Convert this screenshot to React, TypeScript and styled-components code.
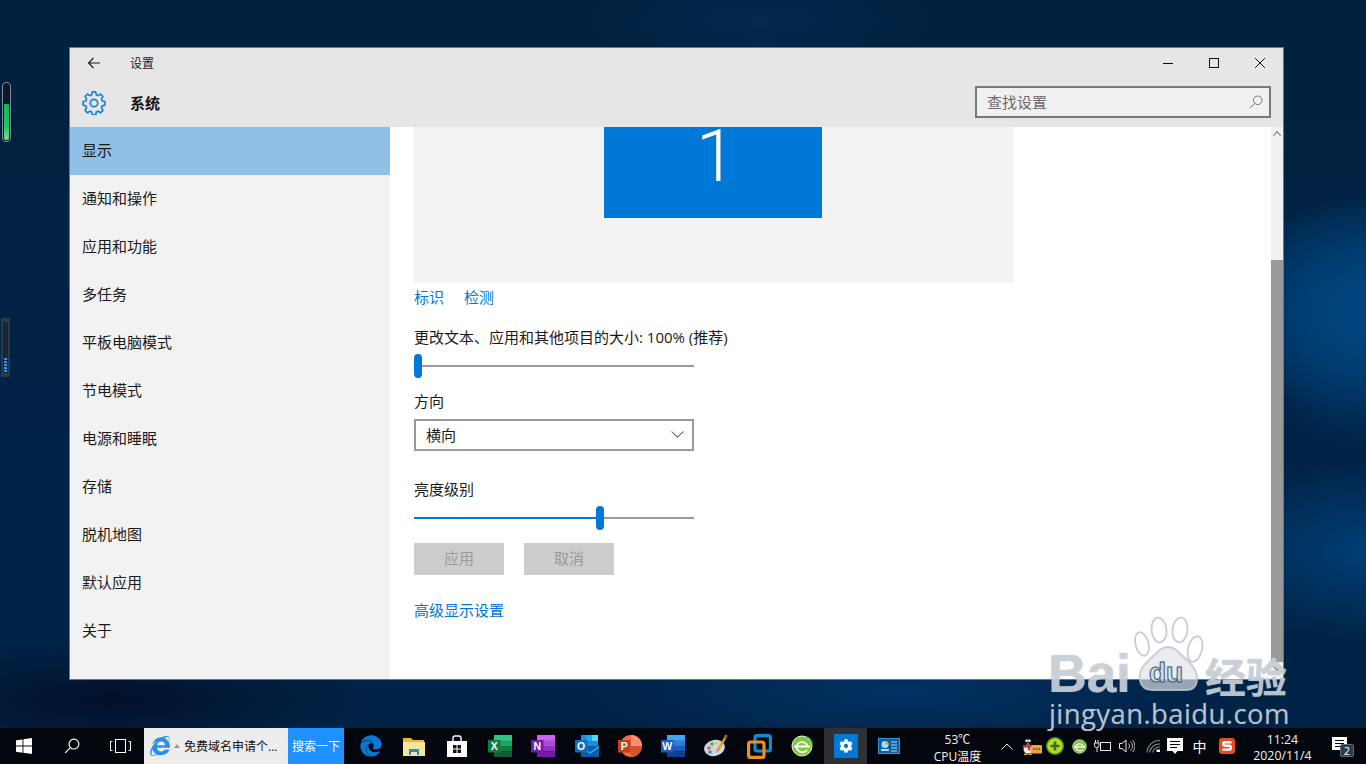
import React from "react";
import styled, { createGlobalStyle } from "styled-components";
import { FaEdge, FaInternetExplorer, FaCog } from "react-icons/fa";

const CJK = `"Open Sans", "Noto Sans CJK SC", sans-serif`;

const Global = createGlobalStyle`
  html, body { margin: 0; padding: 0; width: 1366px; height: 764px; overflow: hidden; }
  body { font-family: ${CJK}; font-size: 15px; color: #1a1a1a; }
  * { box-sizing: border-box; }
`;

const Desktop = styled.div`
  position: relative;
  width: 1366px;
  height: 764px;
  display: flex;
  flex-direction: column;
  overflow: hidden;
  background:
    radial-gradient(130px 130px at 100% 42%, #00447e 0%, rgba(0, 68, 126, 0) 100%),
    radial-gradient(160px 110px at 100% 40%, #004580 0%, rgba(0, 69, 128, 0) 100%),
    radial-gradient(170px 90px at 100% 72%, #003f75 0%, rgba(0, 63, 117, 0) 100%),
    radial-gradient(320px 60px at 900px 690px, #013163 0%, rgba(1, 49, 99, 0) 100%),
    radial-gradient(260px 60px at 110px 700px, #01102a 0%, rgba(1, 16, 42, 0) 100%),
    radial-gradient(180px 50px at 760px 20px, #03294f 0%, rgba(3, 41, 79, 0) 100%),
    linear-gradient(180deg, #01213f 0%, #012347 60%, #012347 100%);
`;

const WindowArea = styled.div`
  flex: 1;
  padding: 47px 0 0 69px;
`;

const Win = styled.div`
  width: 1215px;
  height: 633px;
  border: 1px solid #2f87d4;
  background: #fff;
  display: flex;
  flex-direction: column;
`;

const Header = styled.header`
  height: 79px;
  background: #e6e6e6;
  display: flex;
  flex-direction: column;
  flex-shrink: 0;
`;

const TitleRow = styled.div`
  height: 30px;
  display: flex;
  align-items: center;
`;

const BackSlot = styled.div`
  width: 60px;
  display: flex;
  justify-content: center;
  padding-right: 12px;
`;

const TitleText = styled.span`
  font-size: 12px;
  color: #222;
  flex: 1;
  margin-top: -1px;
`;

const Caption = styled.div`
  width: 46px;
  height: 30px;
  display: flex;
  align-items: center;
  justify-content: center;
`;

const HeadRow = styled.div`
  flex: 1;
  display: flex;
  align-items: center;
  padding: 0 12px;
`;

const GearSlot = styled.div`
  width: 48px;
  display: flex;
  align-items: center;
`;

const SectionName = styled.span`
  font-size: 15px;
  font-weight: 700;
  color: #111;
  flex: 1;
`;

const SearchBox = styled.div`
  width: 296px;
  height: 32px;
  margin-top: -2px;
  border: 2px solid #7a7a7a;
  background: #f0f0f0;
  display: flex;
  align-items: center;
  justify-content: space-between;
  padding: 0 6px 0 10px;
  color: #6b6b6b;
`;

const Body = styled.div`
  flex: 1;
  display: flex;
  min-height: 0;
`;

const Sidebar = styled.nav`
  width: 320px;
  background: #f2f2f2;
  flex-shrink: 0;
`;

const NavItem = styled.div<{ $active?: boolean }>`
  height: 48px;
  line-height: 47px;
  padding-left: 12px;
  font-size: 15px;
  color: #1a1a1a;
  background: ${(p) => (p.$active ? "#90c0e8" : "transparent")};
`;

const Content = styled.main`
  flex: 1;
  padding-left: 24px;
  background: #fff;
`;

const Preview = styled.div`
  width: 600px;
  height: 156px;
  background: #f3f3f3;
  padding-left: 190px;
`;

const Monitor = styled.div`
  width: 218px;
  height: 91px;
  background: #0078d7;
  color: #fff;
  font-family: "Roboto", "Open Sans", sans-serif;
  font-weight: 300;
  font-size: 72px;
  line-height: 60px;
  text-align: center;
  padding-left: 6px;
`;

const LinkRow = styled.div`
  display: flex;
  gap: 20px;
  margin-top: 4px;
  height: 20px;
  line-height: 20px;
`;

const Link = styled.a<{ $top?: number }>`
  color: #0078d7;
  font-size: 15px;
  display: block;
  line-height: 20px;
  margin-top: ${(p) => p.$top ?? 0}px;
`;

const Label = styled.div<{ $top: number }>`
  font-size: 15px;
  line-height: 20px;
  color: #1a1a1a;
  margin-top: ${(p) => p.$top}px;
`;

const Slider = styled.div<{ $top: number }>`
  position: relative;
  width: 280px;
  height: 24px;
  margin-top: ${(p) => p.$top}px;
  display: flex;
  align-items: center;
`;

const Track = styled.div`
  width: 100%;
  height: 2px;
  background: #999;
`;

const Fill = styled.div`
  position: absolute;
  left: 0;
  top: 11px;
  height: 2px;
  background: #0078d7;
`;

const Thumb = styled.div`
  position: absolute;
  top: 0;
  width: 8px;
  height: 24px;
  border-radius: 4px;
  background: #0078d7;
`;

const Select = styled.div`
  width: 280px;
  height: 32px;
  margin-top: 8px;
  border: 2px solid #999;
  display: flex;
  align-items: center;
  justify-content: space-between;
  padding: 0 8px 2px 10px;
`;

const ButtonRow = styled.div`
  display: flex;
  gap: 20px;
  margin-top: 13px;
`;

const Btn = styled.div`
  width: 90px;
  height: 32px;
  line-height: 31px;
  text-align: center;
  background: #ccc;
  color: #9a9a9a;
  font-size: 15px;
`;

const Scrollbar = styled.div`
  width: 12px;
  background: #f0f0f0;
  display: flex;
  flex-direction: column;
  align-items: center;
  flex-shrink: 0;
`;

const ArrowCell = styled.div`
  height: 12px;
  display: flex;
  align-items: center;
  justify-content: center;
  width: 100%;
`;

const ScrollSpace = styled.div`
  height: 121px;
`;

const ScrollThumb = styled.div`
  width: 100%;
  height: 402px;
  background: #999;
`;

const Taskbar = styled.footer`
  height: 36px;
  background: #03060c;
  display: flex;
  align-items: center;
  flex-shrink: 0;
  color: #fff;
`;

const Slot = styled.div<{ $w: number }>`
  width: ${(p) => p.$w}px;
  height: 36px;
  flex-shrink: 0;
  display: flex;
  align-items: center;
  justify-content: center;
`;

const IeBox = styled.div`
  width: 144px;
  height: 36px;
  background: #ededed;
  display: flex;
  align-items: center;
  padding-left: 6px;
  color: #111;
  font-size: 12px;
  flex-shrink: 0;
`;

const IeCaret = styled.span`
  width: 0;
  height: 0;
  margin: 0 4px 0 4px;
  border-left: 3px solid transparent;
  border-right: 3px solid transparent;
  border-bottom: 4px solid #999;
`;

const SearchGo = styled.div`
  width: 56px;
  height: 36px;
  line-height: 37px;
  text-align: center;
  background: #1e90ff;
  font-size: 12px;
  color: #fff;
  flex-shrink: 0;
`;

const AppSpacer = styled.div`
  width: 5px;
  flex-shrink: 0;
`;

const AppSlots = styled.div`
  display: grid;
  grid-template-columns: repeat(13, 43.2px);
  flex-shrink: 0;
  margin-right: 9px;
`;

const AppSlot = styled.div<{ $hover?: boolean }>`
  height: 36px;
  display: flex;
  align-items: center;
  justify-content: center;
  background: ${(p) => (p.$hover ? "#2e3033" : "transparent")};
`;

const SettingsTile = styled.div`
  width: 24px;
  height: 24px;
  background: #0078d7;
  display: flex;
  align-items: center;
  justify-content: center;
`;

const Stack = styled.div`
  width: 76px;
  flex-shrink: 0;
  text-align: center;
  font-size: 12px;
  line-height: 17px;
  color: #f2f2f2;
  padding-top: 3px;
`;

const ClockStack = styled(Stack)`
  width: 78px;
  line-height: 16px;
  padding-top: 3px;
  font-size: 12.3px;
`;

const Ime = styled.span`
  font-size: 14px;
  color: #fff;
`;

const Gadget = styled.div<{ $top: number; $h: number; $w: number; $left: number }>`
  position: absolute;
  left: ${(p) => p.$left}px;
  top: ${(p) => p.$top}px;
  width: ${(p) => p.$w}px;
  height: ${(p) => p.$h}px;
`;

const Tube = styled(Gadget)`
  border: 1px solid #7f8b96;
  border-radius: 4px;
  background: #0a1a2c;
  padding: 21px 1px 1px;
`;

const TubeFill = styled.div`
  height: 100%;
  border-radius: 0 0 3px 3px;
  background: linear-gradient(180deg, #12b65a 0%, #22c866 65%, #7fe08a 100%);
`;

const Meter = styled(Gadget)`
  background: #2b3b4a;
  border-radius: 1px;
  padding: 4px 2px 4px;
`;

const MeterInner = styled.div`
  height: 100%;
  background: #1b2530;
  display: flex;
  flex-direction: column;
  justify-content: flex-end;
  align-items: center;
  padding-bottom: 1px;
`;

const MeterBlue = styled.div`
  width: 3px;
  height: 14px;
  background: repeating-linear-gradient(180deg, #19a0f0 0 2px, #123 2px 3px);
`;

const Watermark = styled.div`
  position: absolute;
  left: 1048px;
  top: 616px;
  width: 244px;
  height: 114px;
  pointer-events: none;
  color: rgba(222, 228, 236, 0.72);
  text-shadow: 0 0 1px rgba(120, 130, 140, 0.8);
`;

const MarkBai = styled.span`
  position: absolute;
  left: 0;
  top: 27px;
  font: 700 54px/60px "Liberation Sans", sans-serif;
  letter-spacing: -0.5px;
`;

const MarkCn = styled.span`
  position: absolute;
  left: 157px;
  top: 33px;
  font: 700 41px/52px "Noto Sans CJK SC", sans-serif;
`;

const MarkUrl = styled.span`
  position: absolute;
  left: 1px;
  top: 82px;
  font: 400 27.5px/32px "Open Sans", "Liberation Sans", sans-serif;
  letter-spacing: 0.4px;
  white-space: nowrap;
`;

const MarkPaw = styled.svg`
  position: absolute;
  left: 86px;
  top: 0;
`;

const Back = () => (
  <svg width="14" height="12" viewBox="0 0 14 12" fill="none" stroke="#1a1a1a" strokeWidth="1.1">
    <path d="M13 6H1.5M6.5 1 1.5 6l5 5" />
  </svg>
);
const MinI = () => (
  <svg width="12" height="12" viewBox="0 0 12 12"><path d="M1 6.5h10" stroke="#111" strokeWidth="1" /></svg>
);
const MaxI = () => (
  <svg width="12" height="12" viewBox="0 0 12 12"><rect x="1.5" y="1.5" width="9" height="9" fill="none" stroke="#111" strokeWidth="1" /></svg>
);
const CloseI = () => (
  <svg width="12" height="12" viewBox="0 0 12 12"><path d="M1 1l10 10M11 1 1 11" stroke="#111" strokeWidth="1" /></svg>
);
const HeadGear = () => (
  <svg width="24" height="24" viewBox="0 0 24 24" fill="none" stroke="#1683d8" strokeWidth="1.7">
    <circle cx="12" cy="12" r="3.7" />
    <path d="M10.2 1.5h3.6l.6 2.9 2 .8 2.5-1.6 2.500 2.500-1.600 2.500.8 2 2.900.6v3.600l-2.900.6-.8 2 1.600 2.500-2.500 2.500-2.500-1.600-2 .8-.6 2.900h-3.600l-.6-2.900-2-.8-2.500 1.600-2.500-2.500 1.600-2.500-.8-2-2.900-.6v-3.600l2.900-.6.8-2-1.600-2.500 2.500-2.500 2.500 1.600 2-.8z" strokeLinejoin="round" transform="translate(.6 -.6) scale(.95 1)" />
  </svg>
);
const Lens = ({ c = "#777", s = 14 }: { c?: string; s?: number }) => (
  <svg width={s} height={s} viewBox="0 0 14 14" fill="none" stroke={c} strokeWidth="1">
    <circle cx="8.7" cy="5.3" r="4.3" />
    <path d="M5.6 8.4 1 13" />
  </svg>
);
const Chevron = ({ c = "#555", w = 12, h = 7, up = false, sw = 1 }: { c?: string; w?: number; h?: number; up?: boolean; sw?: number }) => (
  <svg width={w} height={h} viewBox="0 0 12 7" fill="none" stroke={c} strokeWidth={sw} preserveAspectRatio="none">
    <path d={up ? "M.5 6.5 6 1l5.5 5.5" : "M.5.5 6 6 11.5.5"} />
  </svg>
);
const WinLogo = () => (
  <svg width="16" height="16" viewBox="0 0 16 16" fill="#fff">
    <path d="M0 2.3 6.5 1.4v6.2H0zM7.4 1.3 16 0v7.6H7.4zM0 8.5h6.5v6.2L0 13.8zM7.4 8.5H16V16l-8.6-1.3z" />
  </svg>
);
const TaskView = () => (
  <svg width="21" height="14" viewBox="0 0 21 14" fill="none" stroke="#fff" strokeWidth="1">
    <rect x="5.5" y=".5" width="10" height="13" />
    <path d="M2.5 2.5H.5v9h2M18.5 2.5h2v9h-2" />
  </svg>
);
const Folder = () => (
  <svg width="22" height="19" viewBox="0 0 22 19">
    <path d="M0 1h8l2 2h11v15H0z" fill="#e9b93c" />
    <rect x="0" y="5" width="22" height="14" fill="#fbe39a" />
    <rect x="6" y="12" width="10" height="6" fill="#1c8fd0" />
    <rect x="8" y="15" width="6" height="3" fill="#fbe39a" />
  </svg>
);
const Store = () => (
  <svg width="20" height="22" viewBox="0 0 20 22">
    <path d="M6 6V3a2 2 0 0 1 2-2h4a2 2 0 0 1 2 2v3" fill="none" stroke="#fff" strokeWidth="1.4" />
    <rect x="0" y="6" width="20" height="16" fill="#fff" />
    <path d="M6 10h3.5v3.5H6zM10.5 10H14v3.5h-3.5zM6 14.5h3.5V18H6zM10.5 14.5H14V18h-3.5z" fill="#111" />
  </svg>
);
type Office = { a: string; b: string; c: string; d: string; tile: string; l: string };
const OfficeIcon = ({ a, b, c, d, tile, l }: Office) => (
  <svg width="24" height="22" viewBox="0 0 24 22">
    <rect x="6" y="0" width="18" height="6" fill={a} />
    <rect x="6" y="5.5" width="18" height="5.5" fill={b} />
    <rect x="6" y="11" width="18" height="5.5" fill={c} />
    <rect x="6" y="16.5" width="18" height="5.5" fill={d} />
    <rect x="0" y="5" width="12.5" height="12.5" fill={tile} />
    <text x="6.2" y="15" textAnchor="middle" fontSize="10.5" fontWeight="700" fill="#fff" fontFamily="Liberation Sans">{l}</text>
  </svg>
);
const Outlook = () => (
  <svg width="24" height="22" viewBox="0 0 24 22">
    <rect x="6" y="0" width="17" height="12" fill="#1490df" />
    <rect x="11" y="0" width="6" height="6" fill="#28a8ea" />
    <rect x="17" y="0" width="6" height="6" fill="#50d9ff" />
    <path d="M6 11h18v11H6z" fill="#0a5ea8" />
    <path d="M6 11l9 6 9-6v2l-9 6-9-6z" fill="#28a8ea" />
    <rect x="0" y="5" width="12.5" height="12.5" fill="#0f6cbd" />
    <text x="6.2" y="15" textAnchor="middle" fontSize="10.5" fontWeight="700" fill="#fff" fontFamily="Liberation Sans">O</text>
  </svg>
);
const Ppt = () => (
  <svg width="24" height="24" viewBox="0 0 24 24">
    <circle cx="13" cy="12" r="11" fill="#ed6c47" />
    <path d="M13 1a11 11 0 0 1 11 11H13z" fill="#ff8f6b" />
    <path d="M13 12h11a11 11 0 0 1-11 11z" fill="#d35230" />
    <rect x="0" y="6" width="12.5" height="12.5" fill="#c43e1c" />
    <text x="6.2" y="16" textAnchor="middle" fontSize="10.5" fontWeight="700" fill="#fff" fontFamily="Liberation Sans">P</text>
  </svg>
);
const Palette = () => (
  <svg width="24" height="24" viewBox="0 0 24 24">
    <ellipse cx="10.5" cy="14" rx="10.5" ry="8" fill="#cfd8de" transform="rotate(-14 10.5 14)" />
    <circle cx="5" cy="14" r="1.8" fill="#e85c40" />
    <circle cx="8" cy="10" r="1.8" fill="#3fb35a" />
    <circle cx="12.5" cy="9" r="1.6" fill="#e8c43a" />
    <circle cx="6" cy="18" r="1.8" fill="#3a8ee0" />
    <path d="M22 .5 23.5 2 15 17l-3 2 .7-3.4z" fill="#e59b2e" />
    <path d="M20.5 1 23.5 2.5 22 5 19.5 3.5z" fill="#8a5a2a" />
  </svg>
);
const Vmware = () => (
  <svg width="25" height="25" viewBox="0 0 25 25" fill="none" strokeWidth="3.2">
    <rect x="8" y="1.6" width="15.4" height="15.4" rx="2" stroke="#0a8fd0" />
    <rect x="1.6" y="8" width="15.4" height="15.4" rx="2" stroke="#f29111" />
  </svg>
);
const Globe360 = ({ s = 22 }: { s?: number }) => (
  <svg width={s} height={s} viewBox="0 0 22 22">
    <circle cx="11" cy="11" r="10" fill="#7ccc3a" stroke="#e8f5d8" strokeWidth="1" />
    <path d="M3 11.5h16" stroke="#fff" strokeWidth="2" />
    <path d="M5.5 11a5.8 5.8 0 0 1 11 0M5.5 11a6 6 0 0 0 10.500 4.200" fill="none" stroke="#fff" strokeWidth="1.8" />
    <path d="M16 1.5c3 1.5 5 4 5.5 7" fill="none" stroke="#1d7f2d" strokeWidth="1.2" />
  </svg>
);
const Board = () => (
  <svg width="22" height="16" viewBox="0 0 22 16">
    <rect x=".5" y=".5" width="21" height="15" fill="#0d5f9e" stroke="#2b95d8" />
    <circle cx="7" cy="6.5" r="3.5" fill="#a6dcff" />
    <path d="M7 6.5V3a3.5 3.5 0 0 1 3.5 3.5z" fill="#f0a030" />
    <rect x="3" y="11" width="8" height="2" fill="#a6dcff" />
    <path d="M13 4h6M13 7h6M13 10h6M13 13h6" stroke="#a6dcff" strokeWidth="1.2" />
  </svg>
);
const Qq = () => (
  <svg width="20" height="18" viewBox="0 0 20 18">
    <ellipse cx="6" cy="5" rx="3.8" ry="4.5" fill="#141414" />
    <circle cx="4.6" cy="3.8" r="1.3" fill="#fff" />
    <circle cx="7.4" cy="3.8" r="1.3" fill="#fff" />
    <path d="M4.5 5.8h3L6 7z" fill="#f5b020" />
    <ellipse cx="6" cy="12" rx="4.5" ry="4.5" fill="#f0f0f0" />
    <path d="M1 8h10v2.500H8l.5 3.500-2.500-1V10.500H1z" fill="#d92c20" />
    <path d="M2 16.500h3.500v1.500H2zM6.500 16.500H10v1.500H6.500z" fill="#f0a020" />
    <rect x="9" y="8" width="11" height="8.5" rx="1" fill="#eda23a" />
    <path d="M11.500 12h1.500M14 12h1.500M16.500 12h1.500" stroke="#6a4010" strokeWidth="1.3" />
  </svg>
);
const PlusBall = () => (
  <svg width="18" height="18" viewBox="0 0 18 18">
    <circle cx="9" cy="9" r="8.3" fill="#c6d41a" stroke="#3f9a2e" strokeWidth="1.4" />
    <path d="M9 4.5v9M4.500 9h9" stroke="#1d7a2a" strokeWidth="2.6" />
  </svg>
);
const Power = () => (
  <svg width="17" height="13" viewBox="0 0 17 13" fill="none" stroke="#e8e8e8" strokeWidth="1">
    <rect x="6.5" y="2.5" width="10" height="8" />
    <path d="M1.500 0v3M4 0v3M.5 3h4.500v2.500a2 2 0 0 1-2 2h-.5a2 2 0 0 1-2-2zM3 7.500V12" />
  </svg>
);
const Volume = () => (
  <svg width="16" height="14" viewBox="0 0 16 14" fill="none" stroke="#e8e8e8" strokeWidth="1">
    <path d="M.5 4.500h2.500L7 1v12L3 9.500H.5z" />
    <path d="M9.500 4.500a3.500 3.500 0 0 1 0 5M11.500 2.500a6 6 0 0 1 0 9M13.500 1a8.500 8.500 0 0 1 0 12" strokeOpacity=".75" />
  </svg>
);
const Wifi = () => (
  <svg width="15" height="14" viewBox="0 0 15 14" fill="none" stroke="#8c8c8c" strokeWidth="1.1">
    <path d="M1 13.500A12.500 12.500 0 0 1 14 1.500" />
    <path d="M3.500 13.500a10 10 0 0 1 10.500-8.500" />
    <path d="M6.500 13.500a7 7 0 0 1 7.500-5.500" />
    <path d="M10.500 13v-2.500h3.500V13z" fill="#fff" stroke="none" />
  </svg>
);
const Action = () => (
  <svg width="16" height="17" viewBox="0 0 16 17">
    <path d="M0 0h16v13h-5.500L8 16l-2.500-3H0z" fill="#fff" />
    <path d="M3 3.500h10M3 6.500h10M3 9.500h7" stroke="#03060c" strokeWidth="1" />
  </svg>
);
const Sogou = () => (
  <svg width="16" height="16" viewBox="0 0 16 16">
    <rect width="16" height="16" rx="3" fill="#ea4a1f" />
    <path d="M12.500 4.200H6a1.800 1.800 0 0 0 0 3.600h4a1.800 1.800 0 0 1 0 3.800H3.500" fill="none" stroke="#fff" strokeWidth="2.4" />
  </svg>
);
const Notify = () => (
  <svg width="22" height="22" viewBox="0 0 22 22">
    <path d="M0 2h15v13h-15z" fill="#fff" />
    <path d="M3 5.500h9M3 8.500h9M3 11.500h6" stroke="#03060c" strokeWidth="1" />
    <rect x="8.5" y="9.5" width="13" height="12" rx="1.5" fill="#2c3a4a" stroke="#5b6b7a" />
    <text x="15" y="19.5" textAnchor="middle" fontSize="11" fill="#fff" fontFamily="Open Sans">2</text>
  </svg>
);
const Paw = () => (
  <MarkPaw width="76" height="80" viewBox="0 0 76 80" fill="none" stroke="rgba(190,196,205,.85)" strokeWidth="1.8">
    <ellipse cx="8" cy="28" rx="6.5" ry="12" transform="rotate(-14 8 28)" fill="rgba(255,255,255,.1)" />
    <ellipse cx="25" cy="14" rx="7.5" ry="12.5" transform="rotate(-6 25 14)" fill="rgba(255,255,255,.1)" />
    <ellipse cx="46" cy="14" rx="7.5" ry="12.5" transform="rotate(6 46 14)" fill="rgba(255,255,255,.1)" />
    <ellipse cx="61" cy="33" rx="7" ry="13" transform="rotate(14 61 33)" fill="rgba(255,255,255,.1)" />
    <path d="M34 31c-8 0-12 7-19 13-8 7-11 13-9 21 1.500 6 6 9 12 9h34c6 0 10-3 11-9 1-8-2-14-10-21-7-6-11-13-19-13z" fill="rgba(222,228,236,.68)" />
    <text x="32" y="66" textAnchor="middle" fontSize="28" fontWeight="700" fontFamily="Liberation Sans" fill="rgba(255,255,255,.55)" stroke="rgba(40,70,105,.75)" strokeWidth="1">du</text>
  </MarkPaw>
);

const NAV = ["显示", "通知和操作", "应用和功能", "多任务", "平板电脑模式", "节电模式", "电源和睡眠", "存储", "脱机地图", "默认应用", "关于"];

export default function App() {
  return (
    <Desktop>
      <Global />
      <Tube $left={2} $top={82} $w={9} $h={60}><TubeFill /></Tube>
      <Meter $left={1} $top={318} $w={9} $h={59}><MeterInner><MeterBlue /></MeterInner></Meter>
      <WindowArea>
        <Win>
          <Header>
            <TitleRow>
              <BackSlot><Back /></BackSlot>
              <TitleText>设置</TitleText>
              <Caption><MinI /></Caption>
              <Caption><MaxI /></Caption>
              <Caption><CloseI /></Caption>
            </TitleRow>
            <HeadRow>
              <GearSlot><HeadGear /></GearSlot>
              <SectionName>系统</SectionName>
              <SearchBox>查找设置<Lens /></SearchBox>
            </HeadRow>
          </Header>
          <Body>
            <Sidebar>
              {NAV.map((n, i) => (
                <NavItem key={n} $active={i === 0}>{n}</NavItem>
              ))}
            </Sidebar>
            <Content>
              <Preview><Monitor>1</Monitor></Preview>
              <LinkRow><Link>标识</Link><Link>检测</Link></LinkRow>
              <Label $top={20}>更改文本、应用和其他项目的大小: 100% (推荐)</Label>
              <Slider $top={7}><Track /><Thumb style={{ left: 0 }} /></Slider>
              <Label $top={13}>方向</Label>
              <Select>横向<Chevron c="#555" w={13} h={7} /></Select>
              <Label $top={28}>亮度级别</Label>
              <Slider $top={7}><Track /><Fill style={{ width: 186 }} /><Thumb style={{ left: 182 }} /></Slider>
              <ButtonRow><Btn>应用</Btn><Btn>取消</Btn></ButtonRow>
              <Link $top={25}>高级显示设置</Link>
            </Content>
            <Scrollbar>
              <ArrowCell><Chevron c="#777" w={8} h={5} up sw={1.6} /></ArrowCell>
              <ScrollSpace />
              <ScrollThumb />
              <ArrowCell><Chevron c="#777" w={8} h={5} sw={1.6} /></ArrowCell>
            </Scrollbar>
          </Body>
        </Win>
      </WindowArea>
      <Taskbar>
        <Slot $w={48}><WinLogo /></Slot>
        <Slot $w={48}><Lens c="#fff" s={16} /></Slot>
        <Slot $w={48}><TaskView /></Slot>
        <IeBox>
          <FaInternetExplorer size={20} color="#2b8fe8" />
          <IeCaret />
          免费域名申请个...
        </IeBox>
        <SearchGo>搜索一下</SearchGo>
        <AppSpacer />
        <AppSlots>
          <AppSlot><FaEdge size={22} color="#0a78d4" /></AppSlot>
          <AppSlot><Folder /></AppSlot>
          <AppSlot><Store /></AppSlot>
          <AppSlot><OfficeIcon a="#33c481" b="#21a366" c="#107c41" d="#185c37" tile="#107c41" l="X" /></AppSlot>
          <AppSlot><OfficeIcon a="#ca64ea" b="#ae4bd5" c="#9332bf" d="#7719aa" tile="#7719aa" l="N" /></AppSlot>
          <AppSlot><Outlook /></AppSlot>
          <AppSlot><Ppt /></AppSlot>
          <AppSlot><OfficeIcon a="#41a5ee" b="#2b7cd3" c="#185abd" d="#103f91" tile="#185abd" l="W" /></AppSlot>
          <AppSlot><Palette /></AppSlot>
          <AppSlot><Vmware /></AppSlot>
          <AppSlot><Globe360 /></AppSlot>
          <AppSlot $hover><SettingsTile><FaCog size={14} color="#fff" /></SettingsTile></AppSlot>
          <AppSlot><Board /></AppSlot>
        </AppSlots>
        <Stack>53℃<br />CPU温度</Stack>
        <Slot $w={24}><Chevron c="#eee" w={12} h={7} up /></Slot>
        <Slot $w={26}><Qq /></Slot>
        <Slot $w={20}><PlusBall /></Slot>
        <Slot $w={28}><Globe360 s={15} /></Slot>
        <Slot $w={18}><Power /></Slot>
        <Slot $w={32}><Volume /></Slot>
        <Slot $w={20}><Wifi /></Slot>
        <Slot $w={24}><Action /></Slot>
        <Slot $w={24}><Ime>中</Ime></Slot>
        <Slot $w={32}><Sogou /></Slot>
        <ClockStack>11:24<br />2020/11/4</ClockStack>
        <Slot $w={44}><Notify /></Slot>
      </Taskbar>
      <Watermark>
        <Paw />
        <MarkBai>Bai</MarkBai>
        <MarkCn>经验</MarkCn>
        <MarkUrl>jingyan.baidu.com</MarkUrl>
      </Watermark>
    </Desktop>
  );
}
